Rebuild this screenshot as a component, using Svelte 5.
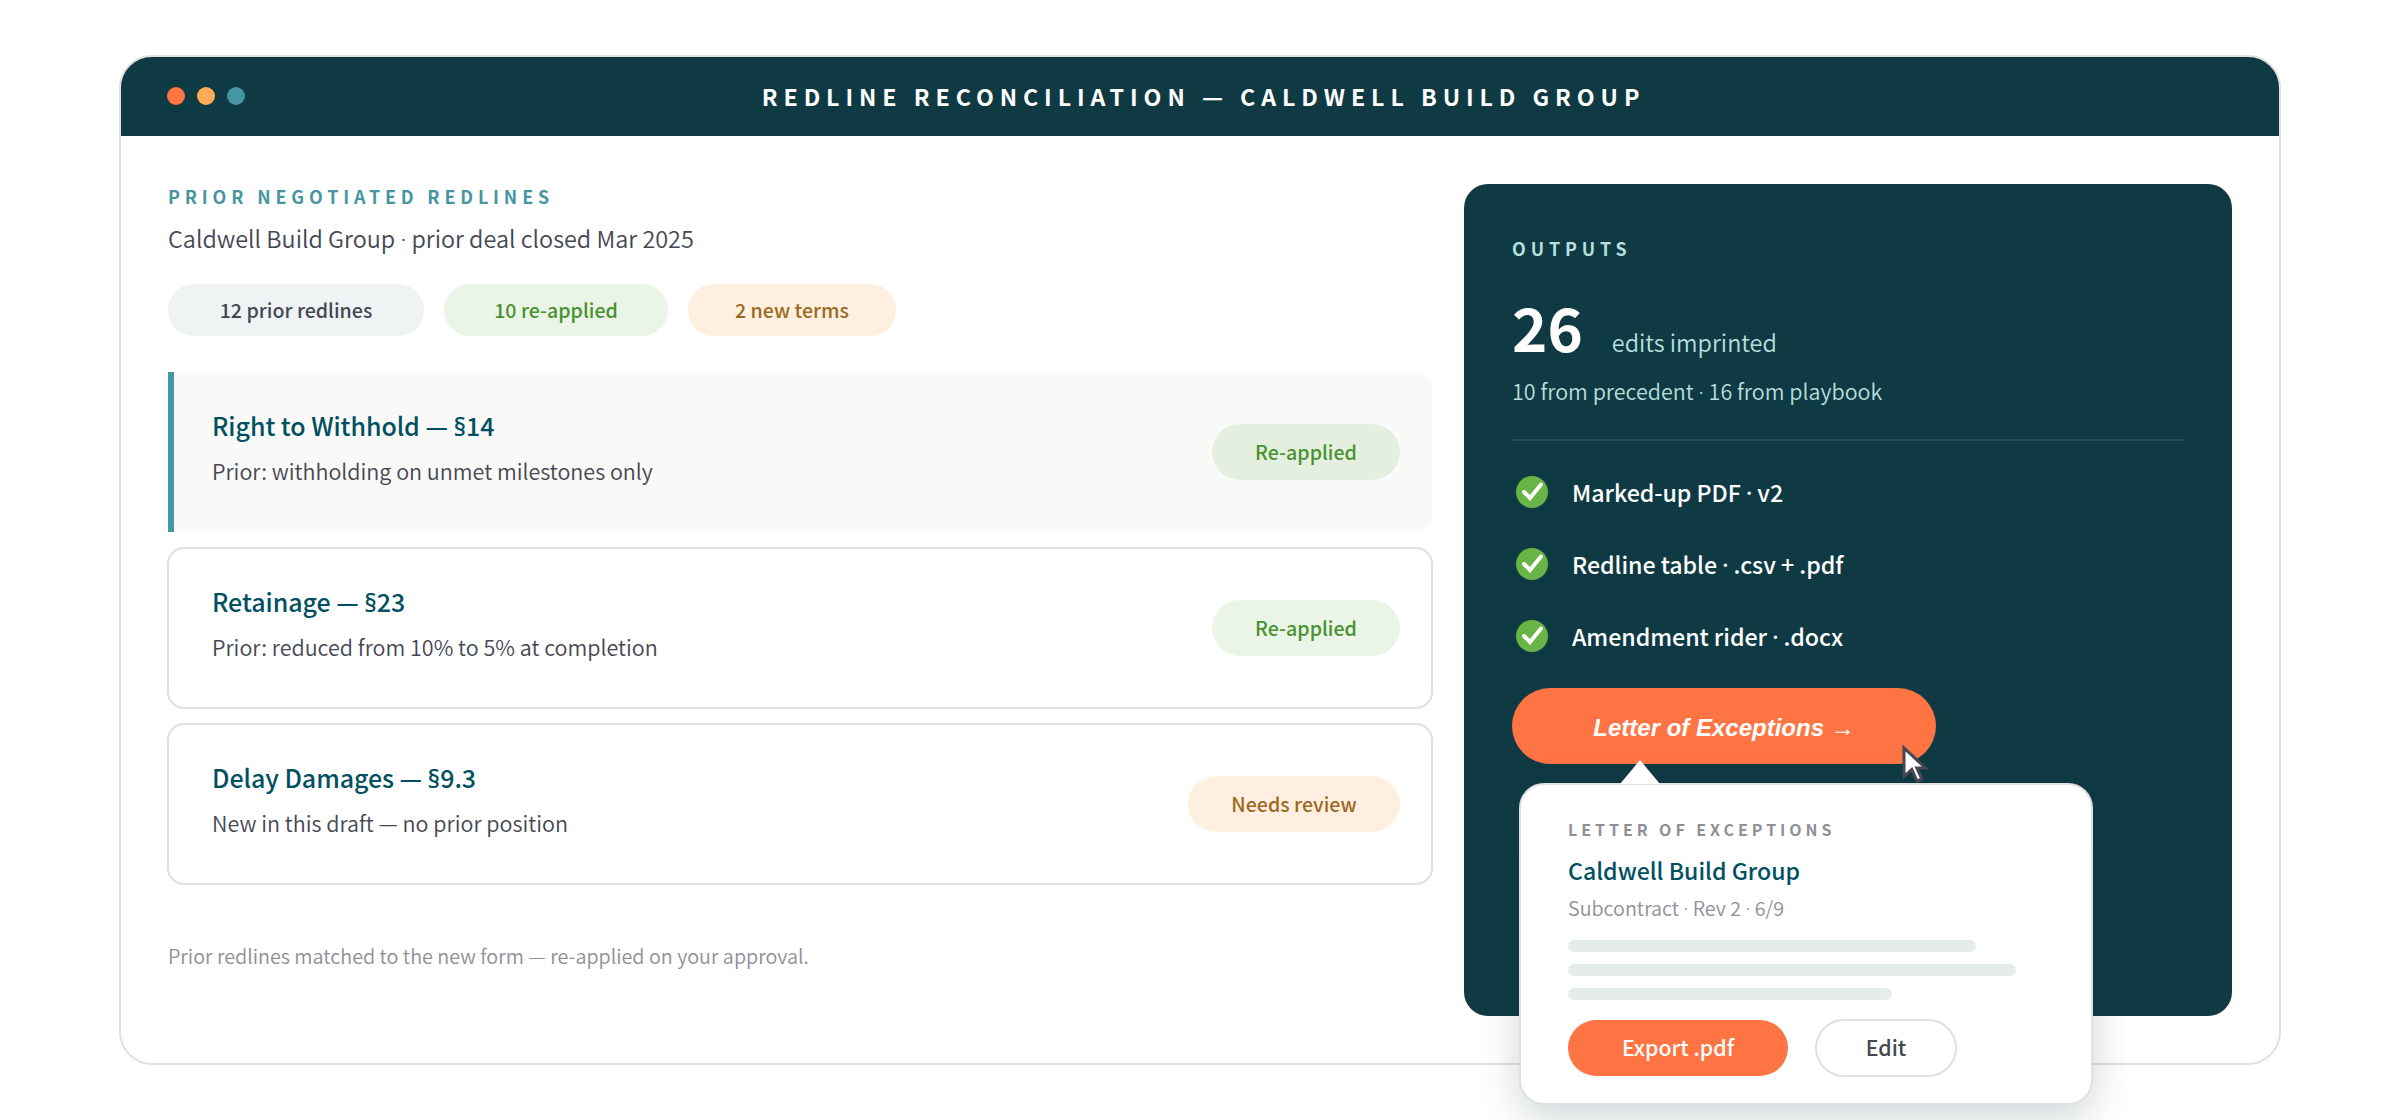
<script>
	const chips = [
		{ label: "12 prior redlines", tone: "neutral", width: 256 },
		{ label: "10 re-applied", tone: "green", width: 224 },
		{ label: "2 new terms", tone: "amber", width: 208 },
	];

	const redlines = [
		{
			title: "Right to Withhold — §14",
			note: "Prior: withholding on unmet milestones only",
			status: "Re-applied",
			tone: "green",
			active: true,
		},
		{
			title: "Retainage — §23",
			note: "Prior: reduced from 10% to 5% at completion",
			status: "Re-applied",
			tone: "green",
			active: false,
		},
		{
			title: "Delay Damages — §9.3",
			note: "New in this draft — no prior position",
			status: "Needs review",
			tone: "amber",
			active: false,
		},
	];

	const outputs = [
		"Marked-up PDF · v2",
		"Redline table · .csv + .pdf",
		"Amendment rider · .docx",
	];

	// widths of the placeholder text lines in the letter preview
	const previewLines = [408, 448, 324];
</script>

<!-- the CJK face sets § and · full width, so both use the latin face -->
{#snippet latin(text)}{#each text.split(/([§·])/) as part}{#if part === "§" || part === "·"}<span class="latin">{part}</span>{:else}{part}{/if}{/each}{/snippet}

<div class="window">
	<header class="titlebar">
		<div class="dots">
			<span class="dot red"></span>
			<span class="dot yellow"></span>
			<span class="dot teal"></span>
		</div>
		<h1>REDLINE RECONCILIATION — CALDWELL BUILD GROUP</h1>
	</header>

	<div class="body">
		<section class="redlines">
			<h2 class="eyebrow">PRIOR NEGOTIATED REDLINES</h2>
			<p class="deal">{@render latin("Caldwell Build Group · prior deal closed Mar 2025")}</p>

			<div class="chips">
				{#each chips as chip}
					<span class="chip {chip.tone}" style="width: {chip.width}px">{chip.label}</span>
				{/each}
			</div>

			<div class="rows">
				{#each redlines as row}
					<article class="row" class:active={row.active}>
						<div class="row-text">
							<h3>{@render latin(row.title)}</h3>
							<p>{row.note}</p>
						</div>
						<span class="status {row.tone}">{row.status}</span>
					</article>
				{/each}
			</div>

			<p class="footnote">
				Prior redlines matched to the new form — re-applied on your approval.
			</p>
		</section>

		<aside class="panel">
			<h2 class="eyebrow light">OUTPUTS</h2>
			<div class="total">
				<strong>26</strong>
				<span>edits imprinted</span>
			</div>
			<p class="sources">{@render latin("10 from precedent · 16 from playbook")}</p>

			<ul class="outputs">
				{#each outputs as output}
					<li>
						<svg width="32" height="32" viewBox="0 0 32 32">
							<circle cx="16" cy="16" r="16" fill="#66b546" />
							<path
								d="M8 16L14 22L25 8.500"
								fill="none"
								stroke="#fff"
								stroke-width="4"
								stroke-linecap="round"
							/>
						</svg>
						<span>{@render latin(output)}</span>
					</li>
				{/each}
			</ul>

			<button class="letter-button">Letter of Exceptions →</button>

			<div class="popover">
				<svg class="arrow" width="40" height="24" viewBox="0 0 40 24">
					<path d="M0 24L20 0L40 24Z" fill="#fff" />
				</svg>
				<h4>LETTER OF EXCEPTIONS</h4>
				<p class="party">Caldwell Build Group</p>
				<p class="meta">{@render latin("Subcontract · Rev 2 · 6/9")}</p>
				<div class="preview">
					{#each previewLines as width}
						<span style="width: {width}px"></span>
					{/each}
				</div>
				<div class="actions">
					<button class="export">Export .pdf</button>
					<button class="edit">Edit</button>
				</div>
			</div>

			<svg class="cursor" width="30" height="42" viewBox="0 0 30 42">
				<path
					d="M3 4V32.500L10.800 25.500L16 37L21 35L15.800 24H24.500Z"
					fill="#fff"
					stroke="#454753"
					stroke-width="3"
				/>
			</svg>
		</aside>
	</div>
</div>

<style>
	:global(body) {
		margin: 0;
		background: #fff;
		overflow: hidden;
	}

	.window,
	.window button {
		font-family: "Noto Sans CJK SC", "Noto Sans", sans-serif;
	}

	.window {
		box-sizing: border-box;
		width: 2160px;
		height: 1008px;
		margin: 56px 120px;
		border-radius: 32px;
		background: #fff;
		outline: 2px solid #e0e0e0;
		outline-offset: -1px;
		color: #454753;
	}

	h1,
	h2,
	h3,
	h4,
	p,
	ul {
		margin: 0;
		padding: 0;
	}

	button {
		border: none;
		padding: 0;
	}

	.latin {
		font-family: "Noto Sans", sans-serif;
		line-height: 1;
	}

	.titlebar {
		display: grid;
		grid-template-columns: 1fr auto 1fr;
		align-items: center;
		height: 80px;
		padding: 0 47px;
		border-radius: 32px 32px 0 0;
		background: #103a43;
	}

	.titlebar h1 {
		margin-right: -7px;
		color: #fff;
		font-size: 23.2px;
		font-weight: 700;
		line-height: 36px;
		letter-spacing: 5.93px;
	}

	.dots {
		display: flex;
		gap: 12px;
	}

	.dot {
		width: 18px;
		height: 18px;
		border-radius: 50%;
	}

	.dot.red {
		background: #ff7443;
	}

	.dot.yellow {
		background: #ffab57;
	}

	.dot.teal {
		background: #4596a0;
	}

	.body {
		display: flex;
		justify-content: space-between;
		padding: 48px 48px 0;
	}

	.redlines {
		width: 1264px;
	}

	.eyebrow {
		color: #4596a0;
		font-size: 17.9px;
		font-weight: 700;
		line-height: 24px;
		letter-spacing: 4.86px;
	}

	.eyebrow.light {
		color: #b7dfdd;
	}

	.deal {
		margin-top: 12px;
		font-size: 23.4px;
		font-weight: 350;
		line-height: 36px;
	}

	.chips {
		display: flex;
		gap: 20px;
		margin-top: 28px;
	}

	.chip {
		border-radius: 26px;
		font-size: 19.6px;
		font-weight: 500;
		line-height: 52px;
		text-align: center;
	}

	.neutral {
		background: #eff3f4;
	}

	.green {
		width: 188px;
		background: #eaf4e7;
		color: #48922f;
	}

	.amber {
		width: 212px;
		background: #ffefe0;
		color: #9b6a1f;
	}

	.rows {
		display: flex;
		flex-direction: column;
		gap: 16px;
		margin-top: 36px;
	}

	.row {
		display: flex;
		box-sizing: border-box;
		align-items: center;
		justify-content: space-between;
		height: 160px;
		padding: 0 32px 0 44px;
		border-radius: 16px;
		outline: 2px solid #e0e0e0;
		outline-offset: -1px;
	}

	.row.active {
		position: relative;
		outline: none;
		background: #f9f9f7;
	}

	.row.active::before {
		content: "";
		position: absolute;
		top: 0;
		left: 0;
		width: 6px;
		height: 100%;
		background: #4596a0;
	}

	.row.active .status {
		background: #e5efe0;
	}

	.row-text {
		margin-bottom: 11px;
	}

	.row h3 {
		color: #005062;
		font-size: 25px;
		font-weight: 500;
		line-height: 40px;
		letter-spacing: -0.05px;
	}

	.row p {
		margin-top: 8px;
		font-size: 21.5px;
		font-weight: 350;
		line-height: 35px;
	}

	.status {
		border-radius: 28px;
		font-size: 19.6px;
		font-weight: 500;
		line-height: 56px;
		text-align: center;
	}

	.footnote {
		margin-top: 57px;
		color: #8f8f96;
		font-size: 19.75px;
		font-weight: 350;
		line-height: 29px;
	}

	.panel {
		position: relative;
		box-sizing: border-box;
		width: 768px;
		height: 832px;
		padding: 52px 48px 0;
		border-radius: 24px;
		background: #103a43;
		color: #fff;
	}

	.total {
		display: flex;
		align-items: baseline;
		gap: 29px;
		height: 73px;
		margin-top: 29px;
		color: #b7dfdd;
	}

	.total strong {
		color: #fff;
		font-size: 60px;
		font-weight: 700;
		line-height: 73px;
	}

	.total span {
		font-size: 23.4px;
		font-weight: 350;
		line-height: 36px;
	}

	.sources {
		margin-top: 13px;
		color: #b7dfdd;
		font-size: 21.5px;
		font-weight: 350;
		line-height: 31px;
	}

	.outputs {
		margin-top: 33px;
		padding-top: 15px;
		border-top: 2px solid #244c57;
		list-style: none;
	}

	.outputs li {
		display: flex;
		align-items: center;
		gap: 24px;
		height: 72px;
		padding-left: 4px;
		font-size: 23.2px;
		font-weight: 500;
		letter-spacing: -0.05px;
	}

	.window .letter-button {
		display: block;
		width: 424px;
		height: 76px;
		margin-top: 16px;
		padding-top: 4px;
		border-radius: 38px;
		background: #ff7443;
		color: #fff;
		font: italic 700 24px "Liberation Sans", Arial, sans-serif;
	}

	.popover {
		position: absolute;
		top: 600px;
		left: 56px;
		box-sizing: border-box;
		width: 572px;
		height: 320px;
		padding: 33px 48px 0;
		border-radius: 24px;
		background: #fff;
		outline: 2px solid #e0e0e0;
		outline-offset: -1px;
		box-shadow: 0 12px 40px rgba(16, 58, 67, 0.22);
	}

	.arrow {
		position: absolute;
		top: -24px;
		left: 100px;
	}

	.popover h4 {
		color: #8f8f96;
		font-size: 16px;
		font-weight: 700;
		line-height: 24px;
		letter-spacing: 3.95px;
	}

	.party {
		margin-top: 11px;
		color: #005062;
		font-size: 23.1px;
		font-weight: 500;
		line-height: 36px;
	}

	.meta {
		margin-top: 5px;
		color: #8f8f96;
		font-size: 19.7px;
		font-weight: 350;
		line-height: 29px;
	}

	.preview {
		display: flex;
		flex-direction: column;
		gap: 12px;
		margin-top: 18px;
	}

	.preview span {
		height: 12px;
		border-radius: 6px;
		background: #e6eceb;
	}

	.actions {
		display: flex;
		gap: 28px;
		margin-top: 20px;
	}

	.actions button {
		height: 56px;
		padding-bottom: 3px;
		border-radius: 28px;
		font-size: 21.3px;
		font-weight: 500;
	}

	.export {
		width: 220px;
		background: #ff7443;
		color: #fff;
	}

	.edit {
		width: 140px;
		background: #fff;
		outline: 2px solid #e0e0e0;
		outline-offset: -1px;
		color: #454753;
	}

	.cursor {
		position: absolute;
		top: 560px;
		left: 437px;
	}
</style>
